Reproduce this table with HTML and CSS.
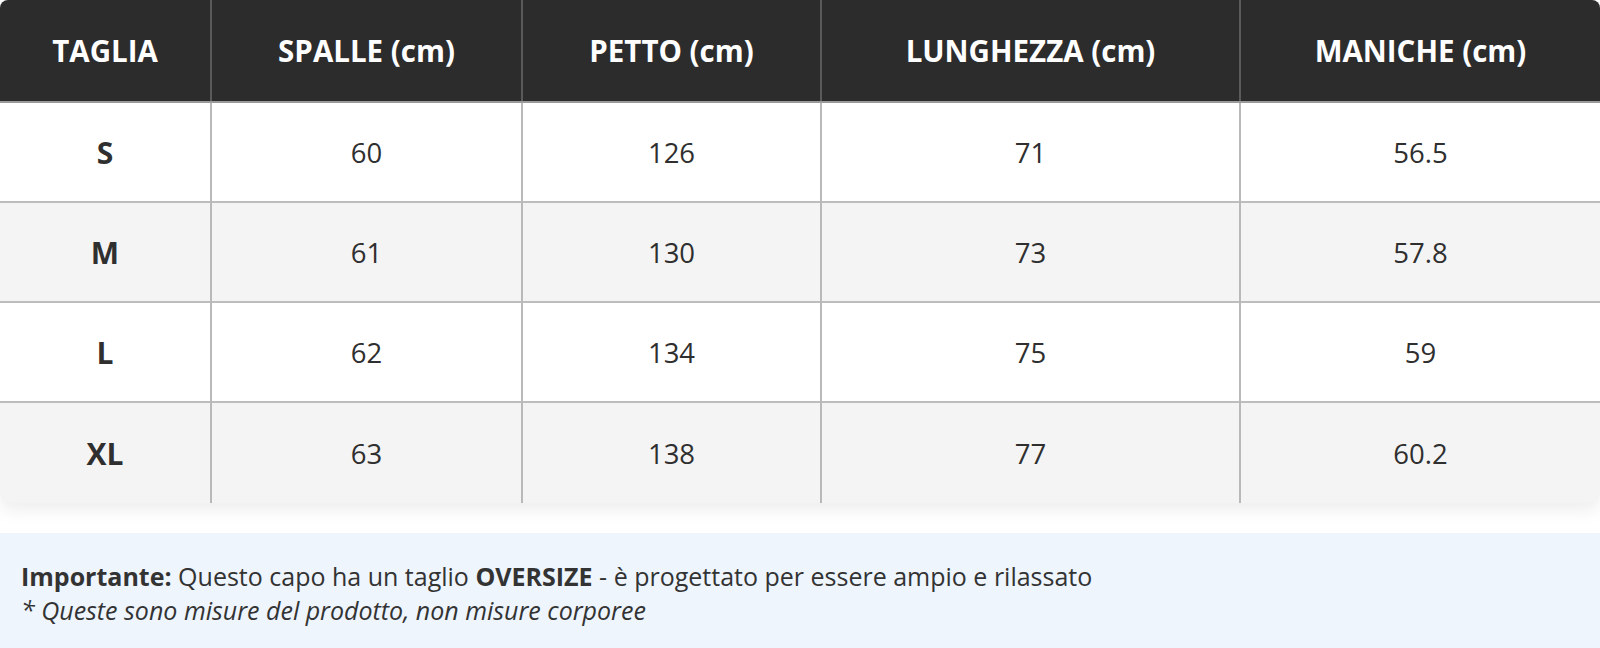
FILE: index.html
```html
<!DOCTYPE html>
<html lang="it">
<head>
<meta charset="utf-8">
<title>Tabella taglie</title>
<link rel="stylesheet" href="styles.css">
</head>
<body>
<div class="size-guide">
  <div class="table-wrap">
    <table class="size-table">
      <colgroup>
        <col class="c1"><col class="c2"><col class="c3"><col class="c4"><col class="c5">
      </colgroup>
      <thead>
        <tr>
          <th>TAGLIA</th>
          <th>SPALLE (cm)</th>
          <th>PETTO (cm)</th>
          <th>LUNGHEZZA (cm)</th>
          <th>MANICHE (cm)</th>
        </tr>
      </thead>
      <tbody>
        <tr><td class="size">S</td><td>60</td><td>126</td><td>71</td><td>56.5</td></tr>
        <tr><td class="size">M</td><td>61</td><td>130</td><td>73</td><td>57.8</td></tr>
        <tr><td class="size">L</td><td>62</td><td>134</td><td>75</td><td>59</td></tr>
        <tr><td class="size">XL</td><td>63</td><td>138</td><td>77</td><td>60.2</td></tr>
      </tbody>
    </table>
  </div>
  <div class="note">
    <p><strong>Importante:</strong> Questo capo ha un taglio <strong>OVERSIZE</strong> - è progettato per essere ampio e rilassato</p>
    <p class="disclaimer"><em>* Queste sono misure del prodotto, non misure corporee</em></p>
  </div>
</div>
</body>
</html>
```
FILE: styles.css
```css
html, body {
  margin: 0;
  padding: 0;
  background: #ffffff;
}

body {
  font-family: "Open Sans", "Noto Sans", "Liberation Sans", sans-serif;
  color: #333333;
}

.size-guide {
  width: 1600px;
}

.table-wrap {
  border-radius: 8px;
  overflow: hidden;
  box-shadow: 0 6px 18px rgba(0, 0, 0, 0.08);
}

.size-table {
  width: 100%;
  border-collapse: collapse;
  table-layout: fixed;
}

.c1 { width: 211px; }
.c2 { width: 311px; }
.c3 { width: 299px; }
.c4 { width: 419px; }
.c5 { width: 360px; }

.size-table th {
  background: #2c2c2c;
  color: #ffffff;
  font-weight: 700;
  font-size: 29.5px;
  height: 101px;
  padding: 0;
  text-align: center;
  border-left: 2px solid #5a5a5a;
  border-bottom: 2px solid #9a9a9a;
}

.size-table td {
  font-size: 27.5px;
  font-weight: 500;
  height: 98px;
  padding: 0;
  text-align: center;
  color: #2f2f2f;
  border-left: 2px solid #b9b9b9;
  border-top: 2px solid #bdbdbd;
}

.size-table tbody tr:last-child td {
  height: 100px;
}

.size-table th:first-child,
.size-table td:first-child {
  border-left: none;
}

.size-table thead + tbody tr:first-child td {
  border-top: none;
}

.size-table tbody tr:nth-child(even) td {
  background: #f4f4f4;
}

.size-table tbody tr:nth-child(odd) td {
  background: #ffffff;
}

.size-table td.size {
  font-weight: 700;
  font-size: 30px;
}

.note {
  margin-top: 30px;
  background: #eef5fd;
  padding: 26px 21px 22px;
  font-size: 25px;
  line-height: 34px;
  color: #333333;
}

.note p {
  margin: 0;
}

.note strong {
  font-weight: 700;
}
```
